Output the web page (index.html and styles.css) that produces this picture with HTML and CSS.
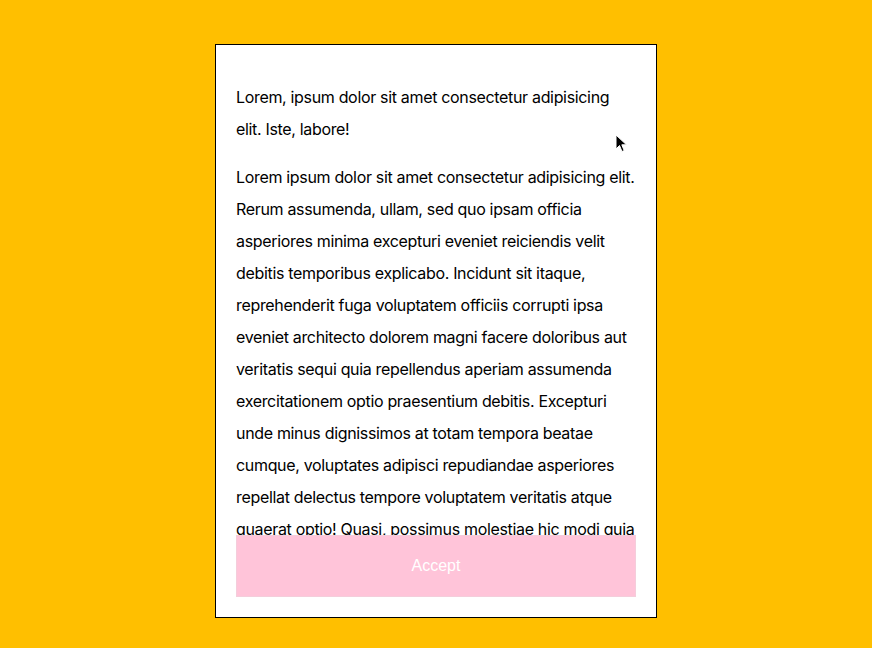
FILE: index.html
```html
<!DOCTYPE html>
<html lang="en">
<head>
<meta charset="utf-8">
<title>Modal</title>
<link rel="stylesheet" href="styles.css">
</head>
<body>
<div class="modal">
  <div class="scroll">
    <p>Lorem, ipsum dolor sit amet consectetur adipisicing elit. Iste, labore!</p>
    <p>Lorem ipsum dolor sit amet consectetur adipisicing elit. Rerum assumenda, ullam, sed quo ipsam officia asperiores minima excepturi eveniet reiciendis velit debitis temporibus explicabo. Incidunt sit itaque, reprehenderit fuga voluptatem officiis corrupti ipsa eveniet architecto dolorem magni facere doloribus aut veritatis sequi quia repellendus aperiam assumenda exercitationem optio praesentium debitis. Excepturi unde minus dignissimos at totam tempora beatae cumque, voluptates adipisci repudiandae asperiores repellat delectus tempore voluptatem veritatis atque quaerat optio! Quasi, possimus molestiae hic modi quia nesciunt dolorum sint ipsam eum voluptas nostrum.</p>
  </div>
  <button class="accept">Accept</button>
</div>
<svg class="cursor" width="14" height="20" viewBox="0 0 14 20"><path d="M1 1 L1 15 L4.5 11.5 L7 17.5 L9.2 16.6 L6.8 10.8 L11.5 10.8 Z" fill="#000" stroke="#fff" stroke-width="1"/></svg>
</body>
</html>
```
FILE: styles.css
```css
html, body {
  margin: 0;
  padding: 0;
}
body {
  background: #ffbf00;
  width: 872px;
  height: 648px;
  overflow: hidden;
  position: relative;
  font-family: Inter, "Noto Sans", sans-serif;
}
.modal {
  box-sizing: border-box;
  width: 442px;
  height: 574px;
  margin: 44px auto 0;
  background: #fff;
  border: 1px solid #000;
  padding: 20px;
  display: flex;
  flex-direction: column;
}
.scroll {
  flex: 1;
  overflow: hidden;
}
.scroll p {
  margin: 16px 0;
  font-size: 16px;
  line-height: 32px;
  color: #000;
  letter-spacing: -0.33px;
}
.accept {
  flex: 0 0 62px;
  background: #ffc4d9;
  border: 1px solid #f4cddb;
  color: #fff;
  font-family: "Liberation Sans", Arial, sans-serif;
  font-size: 16px;
  padding: 0;
  margin: 0;
}
.cursor {
  position: absolute;
  left: 615px;
  top: 134px;
}
```
